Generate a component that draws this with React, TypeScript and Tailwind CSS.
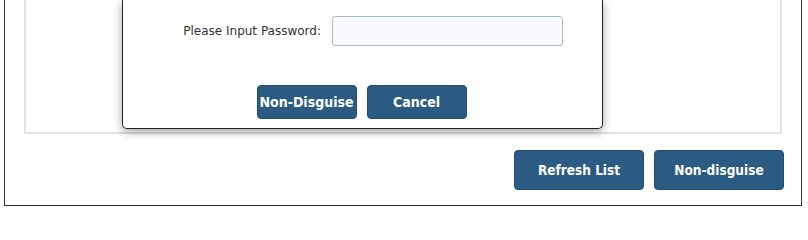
export default function App() {
  const font = { fontFamily: '"DejaVu Sans Condensed", "DejaVu Sans", Tahoma, sans-serif' };
  return (
    <div className="w-[808px] h-[206px] bg-white overflow-hidden" style={font}>
      <div className="ml-[4px] w-[798px] h-[206px] border-l border-r border-b border-[#333] bg-white flex flex-col">
        <div className="mx-[19px] h-[134px] border-l-2 border-r-2 border-b-2 border-[#e2e2e2] flex flex-col justify-end pb-[3px]">
          <div className="ml-[96px] w-[481px] h-[130px] bg-white border-l border-r border-b border-[#222] rounded-b-[5px] shadow-[0_3px_10px_rgba(0,0,0,0.35)] flex flex-col">
            <div className="flex items-center mt-[16px]">
              <div className="w-[198px] text-right text-[12px] text-[#333]" style={{ fontFamily: '"DejaVu Sans", sans-serif' }}>
                Please Input Password:
              </div>
              <input
                type="password"
                className="ml-[11px] w-[231px] h-[30px] border border-[#a9bccb] rounded-[3px] bg-[#f8fafd] outline-none"
              />
            </div>
            <div className="flex justify-center gap-[10px] mt-[39px] pr-[2px]">
              <button className="w-[100px] h-[34px] rounded-[4px] bg-[#2b5b82] border border-[#234d70] text-white text-[14px] font-bold whitespace-nowrap px-0">
                Non-Disguise
              </button>
              <button className="w-[100px] h-[34px] rounded-[4px] bg-[#2b5b82] border border-[#234d70] text-white text-[14px] font-bold">
                Cancel
              </button>
            </div>
          </div>
        </div>
        <div className="flex justify-end gap-[10px] mt-[16px] mr-[17px]">
          <button className="w-[130px] h-[40px] rounded-[4px] bg-[#2b5b82] border border-[#234d70] text-white text-[13.5px] font-bold">
            Refresh List
          </button>
          <button className="w-[130px] h-[40px] rounded-[4px] bg-[#2b5b82] border border-[#234d70] text-white text-[13.5px] font-bold">
            Non-disguise
          </button>
        </div>
      </div>
    </div>
  );
}
